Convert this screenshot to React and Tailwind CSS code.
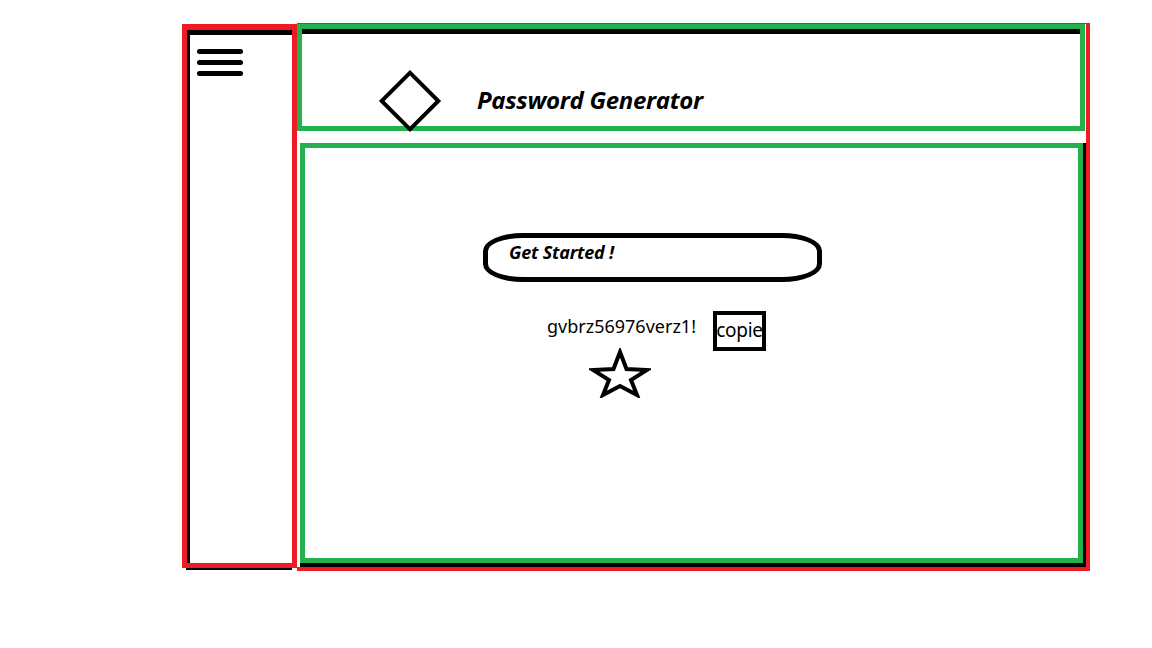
const red = 'border-[#ed1c24]';

function StarOutline() {
  return (
    <svg width="62" height="50" viewBox="0 0 62 50" className="block">
      <polygon
        points="31,4 37.5,21 58,22 42,32 48,47 31,38 14,47 20,32 4,22 24.5,21"
        fill="none"
        stroke="black"
        strokeWidth="4"
        strokeLinejoin="miter"
      />
    </svg>
  );
}

export default function App() {
  return (
    <div className="w-[1152px] h-[648px] bg-white overflow-hidden font-['Open_Sans',sans-serif] text-black">
      <div className="flex pt-[23px] pl-[182px]">
        {/* sidebar */}
        <div className="flex flex-col">
          <div className="mt-[1px] w-[115px] h-[544px] border-[5px] border-t-[6px] border-[#ed1c24] flex">
            <div className="flex-1 border-l-[3px] border-t-[5px] border-black">
              <div className="ml-[7px] mt-[14px] flex flex-col gap-[6px]">
                <span className="block w-[46px] h-[5px] rounded-full bg-black" />
                <span className="block w-[46px] h-[5px] rounded-full bg-black" />
                <span className="block w-[46px] h-[5px] rounded-full bg-black" />
              </div>
            </div>
          </div>
          <div className="ml-[4px] w-[106px] h-[2px] bg-black" />
        </div>

        {/* main column */}
        <div className={`w-[793px] h-[548px] border-t-[1px] border-r-[4px] border-b-[4px] ${red} flex flex-col`}>
          <header className="w-[788px] h-[107px] border-[5px] border-[#22b14c] flex">
            <div className="flex-1 border-t-[5px] border-black flex items-start">
              <div className="ml-[86px] mt-[45px] flex items-center">
                <div className="relative z-10 w-[44px] h-[44px] border-[4px] border-black rotate-45" />
                <h1 className="ml-[45px] -mt-[3px] text-[24px] font-bold italic tracking-[-0.3px] leading-none">
                  Password Generator
                </h1>
              </div>
            </div>
          </header>

          <div className="mt-[12px] ml-[3px] w-[786px] flex-1 border-r-[3px] border-b-[4px] border-black flex">
            <section className="flex-1 border-[5px] border-[#22b14c] flex flex-col items-start">
              <button className="ml-[178px] mt-[85px] w-[339px] h-[49px] border-[5px] border-black rounded-[40px/18px] text-left pl-[21px] pt-[2px] flex items-start">
                <span className="text-[18px] font-bold italic tracking-[-0.2px] leading-[24px]">Get Started !</span>
              </button>

              <div className="ml-[242px] mt-[29px] flex items-start">
                <span className="mt-[3px] text-[18px] leading-[24px] font-['Noto_Sans',sans-serif]">gvbrz56976verz1!</span>
                <button className="ml-[17px] w-[53px] h-[40px] border-[4px] border-black flex items-center justify-center overflow-visible">
                  <span className="text-[19px] leading-none tracking-[-0.3px] font-['Noto_Sans',sans-serif] -mt-[2px] whitespace-nowrap">copie</span>
                </button>
              </div>

              <div className="ml-[284px] -mt-[3px]">
                <StarOutline />
              </div>
            </section>
          </div>
        </div>
      </div>
    </div>
  );
}
